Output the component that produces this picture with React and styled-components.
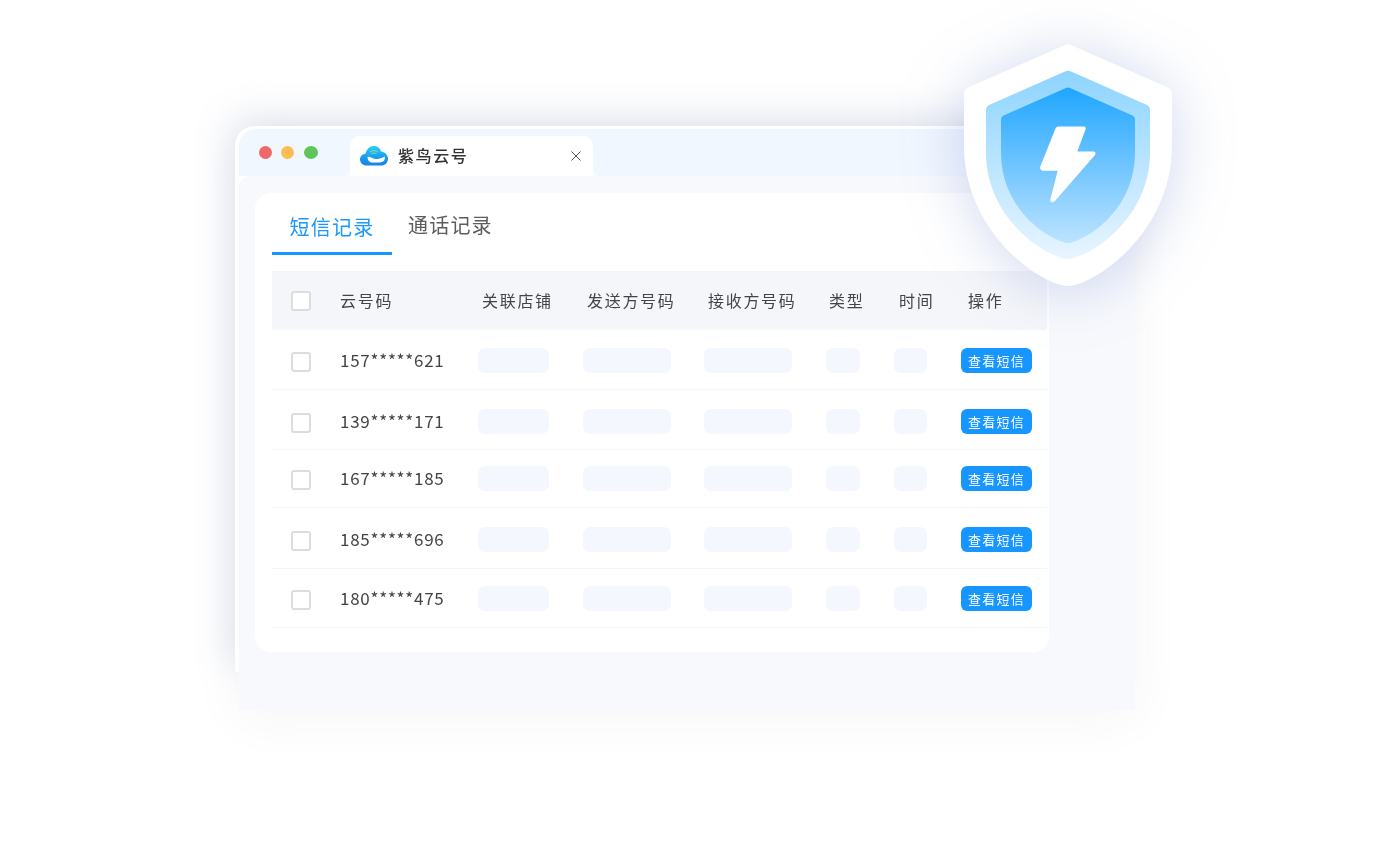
import React from "react";
import styled, { createGlobalStyle } from "styled-components";

const GlobalStyle = createGlobalStyle`
  html, body { margin: 0; padding: 0; background: #fff; }
  body { font-family: "Noto Sans CJK SC", "Noto Sans", sans-serif; overflow: hidden; }
`;

const columns = [
  { label: "关联店铺", w: 71, shift: 4 },
  { label: "发送方号码", w: 88, shift: 4 },
  { label: "接收方号码", w: 88, shift: 4 },
  { label: "类型", w: 34, shift: 3 },
  { label: "时间", w: 33, shift: 5 },
];

// drop pushes the row content down, the rows of the picture are not evenly centred
const rows = [
  { phone: "157*****621", h: 60, drop: 2 },
  { phone: "139*****171", h: 60, drop: 4 },
  { phone: "167*****185", h: 58, drop: 0 },
  { phone: "185*****696", h: 61, drop: 3 },
  { phone: "180*****475", h: 59, drop: 1 },
];

const grid = "68px 138px 105px 121px 122px 68px 67px 1fr";

const CloudLogo = () => (
  <svg width="30" height="22" viewBox="0 0 30 22">
    <defs>
      <linearGradient id="cloudTop" x1="0" y1="0" x2="0" y2="1">
        <stop offset="0" stopColor="#2bcdf2" />
        <stop offset="0.55" stopColor="#1b9fec" />
        <stop offset="1" stopColor="#1583e6" />
      </linearGradient>
    </defs>
    <path d="M8 20.500C3.500 20.500 1 17.800 1 14.500C1 11.200 3.500 9 6.500 8.800C7.500 4.500 10.500 1 14.800 1C18.500 1 21 3.200 22 6.500C26 6.800 29 9.800 29 13.800C29 18 26 20.500 22 20.500Z" fill="url(#cloudTop)" />
    <path d="M8.500 12C11 11 13 14 16.500 14C20 14 23 13 25.800 11.500C26.500 15 24 17.500 21 17.500H13C10.500 17.500 8.500 15 8.500 12Z" fill="#fff" />
    <path d="M11.200 6.800C13.500 5.200 16.500 5.200 18.800 6.800" fill="none" stroke="#7fe6b8" strokeWidth="0.900" strokeLinecap="round" />
    <path d="M12.800 8.600C14 7.800 16 7.800 17.200 8.600" fill="none" stroke="#7fe6b8" strokeWidth="0.900" strokeLinecap="round" />
  </svg>
);

const ShieldBadge = () => (
  <ShieldSvg viewBox="930 20 280 290" width="280" height="290">
    <defs>
      <linearGradient id="shieldMid" x1="0" y1="0" x2="0" y2="1">
        <stop offset="0" stopColor="#8dd4ff" />
        <stop offset="1" stopColor="#e8f5ff" />
      </linearGradient>
      <linearGradient id="shieldCore" x1="0" y1="0" x2="0" y2="1">
        <stop offset="0" stopColor="#20a6ff" />
        <stop offset="1" stopColor="#bde3ff" />
      </linearGradient>
    </defs>
    <path
      d="M1064 45.500Q1068 43.500 1072 45.500L1168 87.500Q1172 89.500 1172 94V146C1172 222 1112 274 1075 285Q1068 287 1061 285C1024 274 964 222 964 146V94Q964 89.500 968 87.500Z"
      fill="#fff"
    />
    <path
      d="M1065 71.500Q1068 70 1071 71.500L1147 105Q1150 106.500 1150 110V153C1150 210 1104 249 1074 258Q1068 260 1062 258C1032 249 986 210 986 153V110Q986 106.500 989 105Z"
      fill="url(#shieldMid)"
    />
    <path
      d="M1066 88Q1068 87 1070 88L1132.500 115.500Q1135 116.500 1135 119.500V153C1135 204 1096 235 1072 242.500Q1068 243.500 1064 242.500C1040 235 1001 204 1001 153V119.500Q1001 116.500 1003.500 115.500Z"
      fill="url(#shieldCore)"
    />
    <path
      d="M1058.500 126.500H1083.500Q1086.500 126.500 1085.500 129.500L1077.300 151.500H1093.500Q1097 152.500 1095 155L1054.500 201.500Q1051.500 203.500 1050.200 200L1057.700 170.700H1042.500Q1039.200 169.500 1040.300 166.500L1055.500 128.500Q1056.300 126.500 1058.500 126.500Z"
      fill="#fff"
    />
  </ShieldSvg>
);

export default function App() {
  return (
    <Stage>
      <GlobalStyle />
      <Window>
        <Frame />
        <Inner>
          <TitleBar>
            <Lights>
              <Light $color="#ef6969" />
              <Light $color="#fdbd55" />
              <Light $color="#5fc556" />
            </Lights>
            <BrowserTab>
              <CloudLogo />
              <TabTitle>紫鸟云号</TabTitle>
              <CloseIcon viewBox="0 0 12 12" width="12" height="12">
                <path d="M1.500 1.500L10.500 10.500M10.500 1.500L1.500 10.500" stroke="#555" strokeWidth="1" fill="none" />
              </CloseIcon>
            </BrowserTab>
          </TitleBar>
          <Body>
            <Panel>
              <Tabs>
                <Tab $active>短信记录</Tab>
                <Tab>通话记录</Tab>
              </Tabs>
              <HeadRow>
                <CheckCell><Check /></CheckCell>
                <HeadLabel>云号码</HeadLabel>
                {columns.map((c) => (
                  <HeadLabel key={c.label} $shift={c.shift}>{c.label}</HeadLabel>
                ))}
                <HeadLabel $shift={7}>操作</HeadLabel>
              </HeadRow>
              {rows.map((r) => (
                <Row key={r.phone} $h={r.h} $drop={r.drop}>
                  <CheckCell $low><Check /></CheckCell>
                  <Phone>{r.phone}</Phone>
                  {columns.map((c) => (
                    <Skeleton key={c.label} $w={c.w} />
                  ))}
                  <ViewButton>查看短信</ViewButton>
                </Row>
              ))}
            </Panel>
          </Body>
        </Inner>
      </Window>
      <ShieldBadge />
    </Stage>
  );
}

const Stage = styled.div`
  position: relative;
  width: 1373px;
  height: 867px;
  box-sizing: border-box;
  padding: 126px 0 0 235px;
  overflow: hidden;
  will-change: transform;
`;

const Window = styled.div`
  position: relative;
  isolation: isolate;
  width: 900px;
  height: 584px;
  &::before {
    content: "";
    position: absolute;
    inset: 3px 0 0 4px;
    z-index: -1;
    box-shadow: 0 6px 50px rgba(60, 60, 70, 0.05);
  }
`;

/* white edge with the blue shadow, it stops short of the window bottom
   and its right end stays hidden behind the shield */
const Frame = styled.div`
  position: absolute;
  top: 0;
  left: 0;
  width: 840px;
  height: 546px;
  background: #fff;
  border-radius: 20px 0 0 0;
  box-shadow: -6px -8px 38px rgba(80, 100, 160, 0.17);
`;

const Inner = styled.div`
  position: relative;
  margin-left: 4px;
  padding-top: 3px;
  width: 896px;
  height: 581px;
  display: flex;
  flex-direction: column;
`;

const TitleBar = styled.div`
  height: 47px;
  flex-shrink: 0;
  display: flex;
  align-items: flex-start;
  background: #f1f7ff;
  border-radius: 17px 0 0 0;
`;

const Lights = styled.div`
  display: flex;
  gap: 9px;
  padding: 17px 0 0 20px;
  width: 91px;
  box-sizing: border-box;
`;

const Light = styled.span`
  width: 13px;
  height: 13px;
  flex-shrink: 0;
  border-radius: 50%;
  background: ${(p) => p.$color};
  &:last-child {
    width: 14px;
    margin-left: 1px;
  }
`;

const BrowserTab = styled.div`
  position: relative;
  margin: 7px 0 0 20px;
  width: 243px;
  height: 40px;
  box-sizing: border-box;
  padding: 0 11px 0 9px;
  display: flex;
  align-items: center;
  gap: 9px;
  background: #fff;
  border-radius: 10px 10px 0 0;
  &::before,
  &::after {
    content: "";
    position: absolute;
    bottom: 0;
    width: 8px;
    height: 8px;
  }
  &::before {
    left: -8px;
    background: radial-gradient(circle at 0 0, transparent 8px, #f8fbff 8.5px);
  }
  &::after {
    right: -8px;
    background: radial-gradient(circle at 100% 0, transparent 8px, #f8fbff 8.5px);
  }
`;

const TabTitle = styled.span`
  flex: 1;
  margin-bottom: 2px;
  font-size: 16px;
  font-weight: 500;
  letter-spacing: 1.6px;
  color: #333;
  line-height: 1;
`;

const CloseIcon = styled.svg`
  display: block;
`;

const Body = styled.div`
  flex: 1;
  padding: 17px 0 0 16px;
  background: #f8f9fd;
  border-radius: 12px 0 0 0;
`;

const Panel = styled.div`
  width: 794px;
  height: 459px;
  box-sizing: border-box;
  padding-left: 17px;
  background: #fff;
  border-radius: 16px;
`;

const Tabs = styled.div`
  height: 62px;
  margin-bottom: 16px;
  display: flex;
`;

const Tab = styled.div`
  width: ${(p) => (p.$active ? "120px" : "116px")};
  margin-left: ${(p) => (p.$active ? "0" : "16px")};
  box-sizing: border-box;
  height: 100%;
  padding-top: ${(p) => (p.$active ? "19px" : "17px")};
  font-size: 20px;
  line-height: 29px;
  letter-spacing: 1.2px;
  text-align: ${(p) => (p.$active ? "center" : "left")};
  color: ${(p) => (p.$active ? "#1a98ff" : "#5c5c5c")};
  border-bottom: 3px solid ${(p) => (p.$active ? "#1896ff" : "transparent")};
`;

const HeadRow = styled.div`
  width: 775px;
  height: 59px;
  display: grid;
  grid-template-columns: ${grid};
  align-items: center;
  background: #f5f6fa;
`;

const Row = styled.div`
  width: 775px;
  height: ${(p) => p.$h}px;
  box-sizing: border-box;
  padding-top: ${(p) => p.$drop}px;
  display: grid;
  grid-template-columns: ${grid};
  align-items: center;
  border-bottom: 1px solid #f5f6f8;
`;

const CheckCell = styled.div`
  padding-left: 19px;
  padding-top: ${(p) => (p.$low ? "2px" : "0")};
  display: flex;
`;

const Check = styled.span`
  width: 20px;
  height: 20px;
  box-sizing: border-box;
  background: #fff;
  border: 2px solid #dcdde0;
  border-radius: 3px;
`;

const HeadLabel = styled.span`
  margin-left: ${(p) => p.$shift || 0}px;
  margin-bottom: 2px;
  font-size: 16px;
  line-height: 1;
  letter-spacing: 1.7px;
  color: #444;
  white-space: nowrap;
`;

const Phone = styled.span`
  margin-bottom: 2px;
  font-size: 17px;
  line-height: 1;
  letter-spacing: 0.75px;
  color: #444;
`;

const Skeleton = styled.span`
  width: ${(p) => p.$w}px;
  height: 25px;
  background: #f4f7fe;
  border-radius: 7px;
`;

const ViewButton = styled.span`
  width: 71px;
  height: 25px;
  box-sizing: border-box;
  padding-bottom: 1px;
  display: flex;
  align-items: center;
  justify-content: center;
  font-size: 13px;
  letter-spacing: 1.2px;
  color: #fff;
  background: #1896ff;
  border-radius: 6px;
`;

/* the badge overlaps the window corner */
const ShieldSvg = styled.svg`
  position: absolute;
  left: 930px;
  top: 20px;
  overflow: visible;
  filter: drop-shadow(0 4px 30px rgba(70, 100, 190, 0.26));
`;
